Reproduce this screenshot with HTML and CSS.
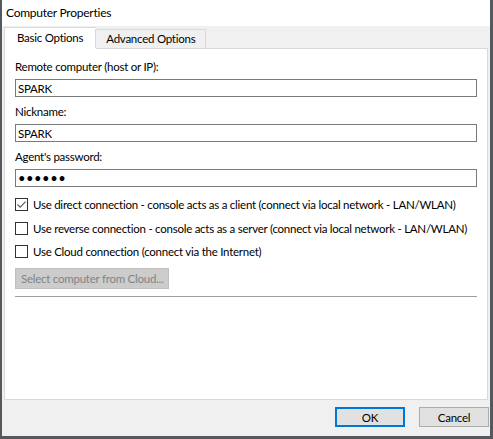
FILE: index.html
```html
<!DOCTYPE html>
<html lang="en">
<head>
<meta charset="UTF-8">
<meta name="viewport" content="width=device-width, initial-scale=1.0">
<link rel="stylesheet" href="styles.css">
<title>Computer Properties</title>
</head>
<body>
<div class="window">
<div class="title-bar">Computer Properties</div>
<div class="client">
<div class="tabs">
<div class="tab selected">Basic Options</div>
<div class="tab">Advanced Options</div>
</div>
<div class="panel">
<div class="field">
<label class="lbl" for="host">Remote computer (host or IP):</label>
<input class="edit" id="host" type="text" value="SPARK">
</div>
<div class="field">
<label class="lbl" for="nick">Nickname:</label>
<input class="edit" id="nick" type="text" value="SPARK">
</div>
<div class="field">
<label class="lbl" for="pass">Agent's password:</label>
<input class="edit pass" id="pass" type="password" value="secret">
</div>
<div class="checks">
<label class="check"><span class="box on"><svg width="11" height="11" viewBox="0 0 11 11"><path d="M1.5 5.5 L4.2 8.2 L9.6 2.6" fill="none" stroke="#5a5a5a" stroke-width="1.1"/></svg></span>Use direct connection - console acts as a client (connect via local network - LAN/WLAN)</label>
<label class="check"><span class="box"></span>Use reverse connection - console acts as a server (connect via local network - LAN/WLAN)</label>
<label class="check"><span class="box"></span>Use Cloud connection (connect via the Internet)</label>
</div>
<button class="btn disabled" disabled>Select computer from Cloud...</button>
<div class="sep"></div>
</div>
<div class="footer">
<button class="btn default">OK</button>
<button class="btn">Cancel</button>
</div>
</div>
</div>
</body>
</html>
```
FILE: styles.css
```css
html,
body {
height: 100%;
margin: 0;
overflow: hidden;
}
body {
background: #55585c;
font-family: Lato, "Noto Sans", sans-serif;
font-size: 11.5px;
letter-spacing: -0.25px;
color: #000;
padding: 0 3px 3px 2px;
box-sizing: border-box;
}
.window {
display: flex;
flex-direction: column;
width: 488px;
height: 436px;
background: #f0f0f0;
}
.title-bar {
height: 26px;
line-height: 26px;
padding-left: 4px;
background: #fff;
font-size: 12px;
}
.client {
flex: 1;
display: flex;
flex-direction: column;
padding: 2px 1px 0 2px;
}
.tabs {
display: flex;
align-items: flex-end;
height: 20px;
position: relative;
z-index: 1;
}
.tab {
height: 18px;
line-height: 18px;
padding: 0 10px;
border: 1px solid #d9d9d9;
border-bottom: none;
background: #f0f0f0;
margin-left: -1px;
white-space: nowrap;
}
.tab.selected {
height: 21px;
line-height: 20px;
margin-left: 0;
margin-bottom: -1px;
padding: 0 13px 0 12px;
background: #fff;
border-right: none;
}
.panel {
height: 352px;
box-sizing: border-box;
background: #fff;
border: 1px solid #d9d9d9;
margin-right: 1px;
padding: 10px 10px 0 10px;
display: flex;
flex-direction: column;
}
.field {
display: flex;
flex-direction: column;
gap: 5px;
margin-bottom: 7px;
}
.lbl {
line-height: 15px;
height: 15px;
}
.edit {
height: 18px;
box-sizing: border-box;
border: 1px solid #7a7a7a;
padding: 0 2px;
font: inherit;
letter-spacing: inherit;
outline: none;
}
.pass {
font-size: 13px;
letter-spacing: 0.5px;
}
.checks {
display: flex;
flex-direction: column;
margin-top: -1px;
}
.check {
display: flex;
align-items: center;
gap: 5px;
height: 23.5px;
white-space: nowrap;
}
.box {
width: 13px;
height: 13px;
flex: none;
box-sizing: border-box;
border: 1px solid #333;
background: #fff;
display: flex;
align-items: center;
justify-content: center;
}
.btn {
height: 20px;
box-sizing: border-box;
padding: 0 5px;
font: inherit;
letter-spacing: inherit;
background: #e1e1e1;
border: 1px solid #adadad;
color: #000;
white-space: nowrap;
}
.btn.disabled {
align-self: flex-start;
margin-top: 4px;
height: 21px;
background: #cccccc;
border-color: #bfbfbf;
color: #838383;
}
.sep {
margin-top: 7px;
border-top: 1px solid #a0a0a0;
}
.footer {
display: flex;
justify-content: flex-end;
gap: 14px;
padding: 7px 0 0 0;
}
.footer .btn {
width: 70px;
}
.btn.default {
border: 2px solid #0078d7;
}
```
